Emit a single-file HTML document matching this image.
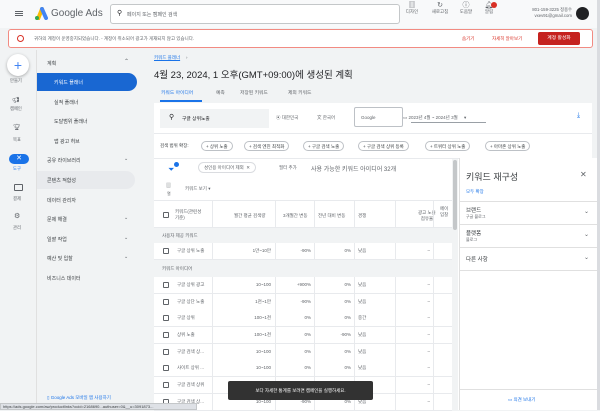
<!DOCTYPE html>
<html><head><meta charset="utf-8"><style>
*{box-sizing:border-box;margin:0;padding:0}
body{width:600px;height:410px;overflow:hidden;background:#f1f3f4;font-family:"Liberation Sans","Noto Sans CJK KR",sans-serif;color:#3c4043;position:relative;font-size:5px}
.a{position:absolute}
.hdr{left:0;top:0;width:600px;height:28px;background:#f8f9fa}
.t{white-space:nowrap}
.row{position:absolute;left:154px;width:298px;height:16.7px;background:#fff;border-bottom:1px solid #e8eaed}
.cb{position:absolute;left:9px;top:5px;width:6px;height:6px;border:1px solid #5f6368;border-radius:1px}
.cell{position:absolute;top:5px;font-size:4.5px;white-space:nowrap;color:#5f6368}
.chip{position:absolute;top:141px;height:10px;border:1px solid #bdc1c6;border-radius:5px;font-size:4.5px;padding:2px 4px;white-space:nowrap;background:#fff}
.nav{position:absolute;left:52px;font-size:5px;color:#3c4043}
.vl{position:absolute;top:0;height:100%;width:1px;background:#e8eaed}
</style></head><body>
<div class="a hdr"></div>
<div class="a" style="left:15px;top:11px;width:8px;height:1px;background:#5f6368;box-shadow:0 2px 0 #5f6368,0 4px 0 #5f6368"></div>
<svg class="a" style="left:33px;top:7px" width="15" height="13" viewBox="0 0 15 13"><path d="M5 12 L9 2" stroke="#fbbc04" stroke-width="4" stroke-linecap="round"/><path d="M9 2 L13 11" stroke="#4285f4" stroke-width="4" stroke-linecap="round"/><circle cx="4" cy="11" r="2" fill="#34a853"/></svg>
<div class="a t" style="left:51px;top:8px;font-size:10px;color:#5f6368">Google Ads</div>
<div class="a" style="left:110px;top:4px;width:290px;height:20px;border:1px solid #c4c7c9;border-radius:3px;background:#fff"></div>
<div class="a t" style="left:117px;top:9px;font-size:7px;color:#202124">⚲</div>
<div class="a t" style="left:127px;top:11px;font-size:5px;color:#5f6368">페이지 또는 캠페인 검색</div>
<div class="a t" style="left:402px;top:3px;font-size:4.5px;color:#5f6368;text-align:center;width:20px;line-height:6px"><span style="font-size:7px">▥</span><br>디자인</div>
<div class="a t" style="left:429px;top:3px;font-size:4.5px;color:#5f6368;text-align:center;width:22px;line-height:6px"><span style="font-size:7px">↻</span><br>새로고침</div>
<div class="a t" style="left:456px;top:3px;font-size:4.5px;color:#5f6368;text-align:center;width:20px;line-height:6px"><span style="font-size:7px">ⓘ</span><br>도움말</div>
<div class="a t" style="left:479px;top:3px;font-size:4.5px;color:#5f6368;text-align:center;width:20px;line-height:6px"><span style="font-size:7px">🔔︎</span><br>알림</div>
<div class="a" style="left:491px;top:2px;width:6px;height:6px;border-radius:3px;background:#d93025"></div>
<div class="a t" style="left:520px;top:7px;font-size:4.3px;color:#5f6368;text-align:right;width:52px;line-height:6px">801-159-3225 정용수<br>vxev91@gmail.com</div>
<div class="a" style="left:576px;top:7px;width:13px;height:13px;border-radius:7px;background:#202124"></div>
<div class="a" style="left:8px;top:29px;width:585px;height:19px;border:1px solid #f28b82;border-radius:3px;background:#fff"></div>
<div class="a" style="left:17px;top:35px;width:7px;height:7px;border:1px solid #d93025;border-radius:4px"></div>
<div class="a t" style="left:34px;top:36px;font-size:4.5px;color:#5f6368">귀하의 계정이 운영중지되었습니다. - 계정이 취소되어 광고가 게재되지 않고 있습니다.</div>
<div class="a t" style="left:462px;top:36px;font-size:4.5px;color:#d93025">숨기기</div>
<div class="a t" style="left:492px;top:36px;font-size:4.5px;color:#d93025">자세히 알아보기</div>
<div class="a t" style="left:538px;top:32px;width:42px;height:13px;background:#c5221f;color:#fff;font-size:4.8px;text-align:center;line-height:13px;border-radius:2px">계정 활성화</div>
<!-- rail -->
<div class="a" style="left:7px;top:54px;width:22px;height:22px;border-radius:11px;background:#fff;box-shadow:0 1px 3px rgba(0,0,0,.3);text-align:center;font-size:14px;line-height:22px;color:#4285f4">+</div>
<div class="a t" style="left:10px;top:78px;font-size:4.3px;color:#5f6368">만들기</div>
<div class="a t" style="left:12px;top:97px;font-size:6px;color:#5f6368">📢︎</div>
<div class="a t" style="left:10px;top:106px;font-size:4.3px;color:#5f6368">캠페인</div>
<div class="a t" style="left:13px;top:124px;font-size:6px;color:#5f6368">🏆︎</div>
<div class="a t" style="left:13px;top:137px;font-size:4.3px;color:#5f6368">목표</div>
<div class="a" style="left:9px;top:154px;width:20px;height:10px;border-radius:5px;background:#1a73e8;color:#fff;font-size:7px;text-align:center;line-height:10px">✕</div>
<div class="a t" style="left:13px;top:166px;font-size:4.3px;color:#1a73e8">도구</div>
<div class="a" style="left:14px;top:184px;width:9px;height:7px;border:1.3px solid #5f6368;border-radius:1px"></div>
<div class="a t" style="left:13px;top:196px;font-size:4.3px;color:#5f6368">결제</div>
<div class="a t" style="left:14px;top:212px;font-size:7px;color:#5f6368">⚙</div>
<div class="a t" style="left:13px;top:225px;font-size:4.3px;color:#5f6368">관리</div>
<div class="a" style="left:36px;top:50px;width:1px;height:360px;background:#e0e0e0"></div>
<!-- nav -->
<div class="nav t" style="left:47px;top:60px">계획</div><div class="a t" style="left:124px;top:58px;font-size:6px;color:#5f6368">⌃</div>
<div class="a" style="left:37px;top:73px;width:100px;height:18px;background:#1967d2;border-radius:0 9px 9px 0"></div>
<div class="nav t" style="left:54px;top:79px;color:#fff">키워드 플래너</div>
<div class="nav t" style="left:54px;top:99px">실적 플래너</div>
<div class="nav t" style="left:54px;top:118px">도달범위 플래너</div>
<div class="nav t" style="left:54px;top:138px">앱 광고 허브</div>
<div class="nav t" style="left:47px;top:157px">공유 라이브러리</div><div class="a t" style="left:124px;top:156px;font-size:5px;color:#5f6368">⌄</div>
<div class="a" style="left:37px;top:171px;width:98px;height:18px;background:#e8eaed;border-radius:0 9px 9px 0"></div>
<div class="nav t" style="left:47px;top:177px">콘텐츠 적합성</div>
<div class="nav t" style="left:47px;top:197px">데이터 관리자</div>
<div class="nav t" style="left:47px;top:216px">문제 해결</div><div class="a t" style="left:124px;top:215px;font-size:5px;color:#5f6368">⌄</div>
<div class="nav t" style="left:47px;top:236px">일괄 작업</div><div class="a t" style="left:124px;top:235px;font-size:5px;color:#5f6368">⌄</div>
<div class="nav t" style="left:47px;top:255px">예산 및 입찰</div><div class="a t" style="left:124px;top:254px;font-size:5px;color:#5f6368">⌄</div>
<div class="nav t" style="left:47px;top:275px">비즈니스 데이터</div>
<div class="a t" style="left:47px;top:395px;font-size:4.5px;color:#1a73e8">▯ Google Ads 모바일 앱 사용하기</div>
<!-- main -->
<div class="a t" style="left:154px;top:55px;font-size:4.5px;color:#1a73e8;text-decoration:underline">키워드 플래너</div><div class="a t" style="left:186px;top:55px;font-size:4.5px;color:#5f6368">›</div>
<div class="a t" style="left:154px;top:67px;font-size:9.5px;color:#202124">4월 23, 2024, 1 오후(GMT+09:00)에 생성된 계획</div>
<div class="a t" style="left:161px;top:89px;font-size:4.8px;color:#1a73e8">키워드 아이디어</div>
<div class="a" style="left:160px;top:100px;width:42px;height:2px;background:#1a73e8"></div>
<div class="a t" style="left:216px;top:89px;font-size:4.8px;color:#5f6368">예측</div>
<div class="a t" style="left:240px;top:89px;font-size:4.8px;color:#5f6368">저장된 키워드</div>
<div class="a t" style="left:288px;top:89px;font-size:4.8px;color:#5f6368">제외 키워드</div>
<div class="a" style="left:154px;top:103px;width:438px;height:307px;background:#fff"></div>
<div class="a" style="left:160px;top:109px;width:109px;height:19px;background:#f1f3f4"></div>
<div class="a t" style="left:169px;top:113px;font-size:7px;color:#202124">⚲</div>
<div class="a t" style="left:182px;top:115px;font-size:4.8px;color:#202124">구글 상위노출</div>
<div class="a t" style="left:276px;top:115px;font-size:4.5px;color:#5f6368">⦿ 대한민국</div>
<div class="a t" style="left:317px;top:115px;font-size:4.5px;color:#5f6368">文 한국어</div>
<div class="a" style="left:354px;top:107px;width:49px;height:20px;border:1px solid #bdc1c6;border-radius:2px"></div>
<div class="a t" style="left:361px;top:115px;font-size:4.5px;color:#5f6368">Google</div>
<div class="a t" style="left:403px;top:115px;font-size:4.5px;color:#5f6368">▭ 2023년 4월 ~ 2024년 3월 &nbsp;&nbsp;&nbsp;&nbsp;▾</div>
<div class="a" style="left:411px;top:122px;width:75px;height:1px;background:#9aa0a6"></div>
<div class="a t" style="left:577px;top:112px;font-size:7px;color:#1a73e8">⤓</div>
<div class="a" style="left:154px;top:133px;width:438px;height:1px;background:#e8eaed"></div>
<div class="a t" style="left:160px;top:143px;font-size:4.5px;color:#3c4043">검색 범위 확장:</div>
<div class="chip" style="left:201px">+ 상위 노출</div>
<div class="chip" style="left:244px">+ 검색 엔진 최적화</div>
<div class="chip" style="left:303px">+ 구글 검색 노출</div>
<div class="chip" style="left:358px">+ 구글 검색 상위 등록</div>
<div class="chip" style="left:425px">+ 트위터 상위 노출</div>
<div class="chip" style="left:485px">+ 아마존 상위 노출</div>
<div class="a" style="left:154px;top:158px;width:305px;height:1px;background:#e8eaed"></div>
<div class="a t" style="left:168px;top:165px;font-size:8px;color:#1a73e8">⏷</div>
<div class="a" style="left:174px;top:162px;width:5px;height:5px;border-radius:3px;background:#1a73e8"></div>
<div class="a t" style="left:198px;top:162px;height:11px;border:1px solid #dadce0;border-radius:6px;padding:2px 5px;font-size:4.5px;color:#5f6368">성인용 아이디어 제외 &nbsp;✕</div>
<div class="a t" style="left:279px;top:165px;font-size:4.5px;color:#5f6368">필터 추가</div>
<div class="a t" style="left:311px;top:164px;font-size:6px;color:#5f6368">사용 가능한 키워드 아이디어 32개</div>
<div class="a t" style="left:166px;top:182px;font-size:5px;color:#5f6368">▥</div>
<div class="a t" style="left:167px;top:191px;font-size:4px;color:#5f6368">열</div>
<div class="a t" style="left:185px;top:186px;font-size:4.5px;color:#5f6368">키워드 보기 ▾</div>
<div class="a" style="left:154px;top:200px;width:298px;height:28px;border-top:1px solid #e8eaed;border-bottom:1px solid #e8eaed;background:#fff">
<div class="cb" style="top:11px"></div>
<div class="cell" style="left:21px;top:8px;line-height:6px">키워드(관련성<br>기준)</div>
<div class="vl" style="left:58px"></div><div class="cell" style="left:80px;top:12px">월간 평균 검색량</div>
<div class="vl" style="left:121px"></div><div class="cell" style="left:129px;top:12px">3개월간 변동</div>
<div class="vl" style="left:160px"></div><div class="cell" style="left:164px;top:12px">전년 대비 변동</div>
<div class="vl" style="left:200px"></div><div class="cell" style="left:204px;top:12px">경쟁</div>
<div class="vl" style="left:241px"></div><div class="cell" style="left:264px;top:9px;line-height:6px;text-align:center">광고 노출<br>점유율</div>
<div class="vl" style="left:279px"></div><div class="cell" style="left:286px;top:5px;line-height:6px">페이<br>입찰</div>
</div>
<div class="a" style="left:154px;top:228px;width:298px;height:15px;background:#f1f3f4"></div>
<div class="a t" style="left:162px;top:233px;font-size:4.5px;color:#5f6368">사용자 제공 키워드</div>
<div class="a" style="left:154px;top:260px;width:298px;height:17px;background:#f1f3f4"></div>
<div class="a t" style="left:162px;top:266px;font-size:4.5px;color:#5f6368">키워드 아이디어</div>
<div id="rows"></div>
<script>
var d=[[243,"구글 상위 노출","1만~10만","-90%","0%","낮음"],[277,"구글 상위 광고","10~100","+900%","0%","낮음"],[294,"구글 상단 노출","1천~1만","-90%","0%","낮음"],[310,"구글 상위","100~1천","0%","0%","중간"],[327,"상위 노출","100~1천","0%","-90%","낮음"],[344,"구글 검색 상...","10~100","0%","0%","낮음"],[360,"사이트 상위 ...","10~100","0%","0%","낮음"],[377,"구글 검색 상위","10~100","0%","0%","낮음"],[394,"구글 검색 상...","10~100","-90%","0%","낮음"]];
var h="";d.forEach(function(r){h+='<div class="row" style="top:'+r[0]+'px"><div class="cb"></div><div class="cell" style="left:23px">'+r[1]+'</div><div class="vl" style="left:58px"></div><div class="cell" style="left:58px;width:59px;text-align:right">'+r[2]+'</div><div class="vl" style="left:121px"></div><div class="cell" style="left:121px;width:36px;text-align:right">'+r[3]+'</div><div class="vl" style="left:160px"></div><div class="cell" style="left:160px;width:37px;text-align:right">'+r[4]+'</div><div class="vl" style="left:200px"></div><div class="cell" style="left:204px">'+r[5]+'</div><div class="vl" style="left:241px"></div><div class="cell" style="left:241px;width:35px;text-align:right">–</div><div class="vl" style="left:279px"></div></div>'});
document.getElementById("rows").innerHTML=h;
</script>
<div class="a" style="left:452px;top:159px;width:6px;height:251px;background:#f1f3f4"></div>
<div class="a" style="left:453px;top:160px;width:4px;height:70px;background:#c4c7c9;border-radius:2px"></div>
<!-- right panel -->
<div class="a" style="left:459px;top:158px;width:138px;height:252px;background:#fff;border-left:1px solid #e0e0e0"></div>
<div class="a" style="left:597px;top:0;width:3px;height:410px;background:#dadce0"></div>
<div class="a t" style="left:466px;top:170px;font-size:9px;color:#3c4043">키워드 재구성</div>
<div class="a t" style="left:580px;top:170px;font-size:8px;color:#5f6368">✕</div>
<div class="a t" style="left:466px;top:189px;font-size:4.5px;color:#1a73e8">모두 확장</div>
<div class="a" style="left:459px;top:201px;width:138px;height:1px;background:#e0e0e0"></div>
<div class="a t" style="left:466px;top:206px;font-size:5.5px;color:#3c4043">브랜드</div>
<div class="a t" style="left:466px;top:214px;font-size:4px;color:#5f6368">구글 블로그</div>
<div class="a t" style="left:584px;top:208px;font-size:6px;color:#5f6368">⌄</div>
<div class="a" style="left:459px;top:224px;width:138px;height:1px;background:#e0e0e0"></div>
<div class="a t" style="left:466px;top:229px;font-size:5.5px;color:#3c4043">플랫폼</div>
<div class="a t" style="left:466px;top:237px;font-size:4px;color:#5f6368">블로그</div>
<div class="a t" style="left:584px;top:231px;font-size:6px;color:#5f6368">⌄</div>
<div class="a" style="left:459px;top:247px;width:138px;height:1px;background:#e0e0e0"></div>
<div class="a t" style="left:466px;top:255px;font-size:5.5px;color:#3c4043">다른 사항</div>
<div class="a t" style="left:584px;top:254px;font-size:6px;color:#5f6368">⌄</div>
<div class="a" style="left:459px;top:270px;width:138px;height:1px;background:#e0e0e0"></div>
<div class="a" style="left:459px;top:389px;width:138px;height:1px;background:#e0e0e0"></div>
<div class="a t" style="left:508px;top:397px;font-size:4.5px;color:#1a73e8">▭ 의견 보내기</div>
<!-- toast -->
<div class="a t" style="left:228px;top:381px;width:145px;height:19px;background:#323232;border-radius:2px;color:#fff;font-size:4.5px;text-align:center;line-height:19px">보다 자세한 통계를 보려면 캠페인을 실행하세요.</div>
<div class="a t" style="left:0;top:403px;width:197px;height:7px;background:#dee1e6;border:1px solid #c4c7c9;font-size:4px;color:#3c4043;padding-left:2px;line-height:5px">https://ads.google.com/aw/productlinks?ocid=2168690...authuser=0&amp;__u=3091873...</div>
</body></html>
